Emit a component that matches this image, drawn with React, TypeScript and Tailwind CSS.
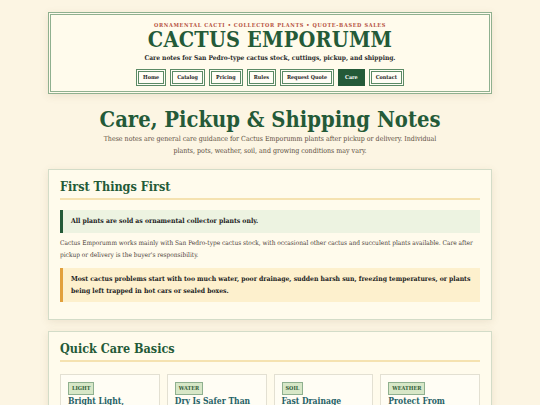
import React from 'react';

const serif = { fontFamily: '"DejaVu Serif Condensed", "DejaVu Serif", serif' };

const navItems = ['Home', 'Catalog', 'Pricing', 'Rules', 'Request Quote', 'Care', 'Contact'];

const basics = [
  { tag: 'LIGHT', title: 'Bright Light,' },
  { tag: 'WATER', title: 'Dry Is Safer Than' },
  { tag: 'SOIL', title: 'Fast Drainage' },
  { tag: 'WEATHER', title: 'Protect From' },
];

function Header() {
  return (
    <header className="border-[3px] border-double border-[#8fb08f] bg-[#fffbec] px-4 pt-[6px] pb-[5px] text-center shadow-[0_2px_8px_rgba(120,100,60,0.12)]">
      <p className="text-[5.5px] leading-[8px] font-bold uppercase tracking-[0.12em] text-[#b5503c]">
        Ornamental Cacti • Collector Plants • Quote-Based Sales
      </p>
      <h1 className="-mt-[1px] text-[21.5px] leading-[24px] font-bold tracking-[0.01em] text-[#245a38]">CACTUS EMPORUMM</h1>
      <p className="mt-[2px] text-[6.6px] leading-[9px] font-bold text-[#2a2a2a]">
        Care notes for San Pedro-type cactus stock, cuttings, pickup, and shipping.
      </p>
      <nav className="mt-[6px] flex justify-center gap-[4px]">
        {navItems.map((item) => (
          <span
            key={item}
            className={
              item === 'Care'
                ? 'border-[3px] border-double border-[#245a38] bg-[#245a38] px-[4px] py-[2px] text-[5.4px] leading-[7px] font-bold text-white'
                : 'border-[3px] border-double border-[#5b8a65] bg-[#fffdf5] px-[4px] py-[2px] text-[5.4px] leading-[7px] font-bold text-[#222]'
            }
          >
            {item}
          </span>
        ))}
      </nav>
    </header>
  );
}

function Card({ title, children }: { title: string; children: React.ReactNode }) {
  return (
    <section className="border border-[#d3dcc8] bg-[#fffbec] px-[11px] pt-[8px] pb-[17px] shadow-[0_2px_8px_rgba(120,100,60,0.12)]">
      <h2 className="border-b-2 border-[#f5e2b0] pb-[2px] text-[12.5px] leading-[18px] font-bold text-[#245a38]">{title}</h2>
      {children}
    </section>
  );
}

export default function App() {
  return (
    <div className="min-h-screen bg-[#fcf5e3] pt-[12px]" style={serif}>
      <div className="mx-auto w-[444px]">
        <Header />

        <div className="mt-[13px] text-center">
          <h1 className="text-[21.8px] leading-[26px] font-bold text-[#245a38]">Care, Pickup &amp; Shipping Notes</h1>
          <p className="mx-auto w-[345px] text-[7px] leading-[12px] text-[#5b4d3f]">
            These notes are general care guidance for Cactus Emporumm plants after pickup or delivery. Individual
            plants, pots, weather, soil, and growing conditions may vary.
          </p>
        </div>

        <div className="mt-[12px] flex flex-col gap-[11px]">
          <Card title="First Things First">
            <div className="mt-[10px] border-l-[3px] border-[#245a38] bg-[#edf3e1] px-[8px] py-[7px] text-[6.8px] leading-[9px] font-bold text-[#222]">
              All plants are sold as ornamental collector plants only.
            </div>
            <p className="mt-[4px] text-[6.5px] leading-[12px] text-[#4a4038]">
              Cactus Emporumm works mainly with San Pedro-type cactus stock, with occasional other cactus and succulent
              plants available. Care after pickup or delivery is the buyer's responsibility.
            </p>
            <div className="mt-[7px] border-l-[3px] border-[#e2a03c] bg-[#fdf0cd] px-[8px] py-[5px] text-[6.8px] leading-[12px] font-bold text-[#222]">
              Most cactus problems start with too much water, poor drainage, sudden harsh sun, freezing temperatures, or
              plants being left trapped in hot cars or sealed boxes.
            </div>
          </Card>

          <Card title="Quick Care Basics">
            <div className="mt-[12px] grid grid-cols-4 gap-[7px]">
              {basics.map((b) => (
                <div key={b.tag} className="flex h-[60px] flex-col items-start border border-[#e3e0d2] bg-[#fffdf4] px-[7px] pt-[7px]">
                  <span className="border border-[#8fb08f] bg-[#d7e7c7] px-[3px] py-[2px] text-[5.5px] leading-[7px] font-bold text-[#2f5a35]">
                    {b.tag}
                  </span>
                  <h3 className="text-[8.5px] leading-[12px] font-bold text-[#1f6268]">{b.title}</h3>
                </div>
              ))}
            </div>
          </Card>
        </div>
      </div>
    </div>
  );
}
